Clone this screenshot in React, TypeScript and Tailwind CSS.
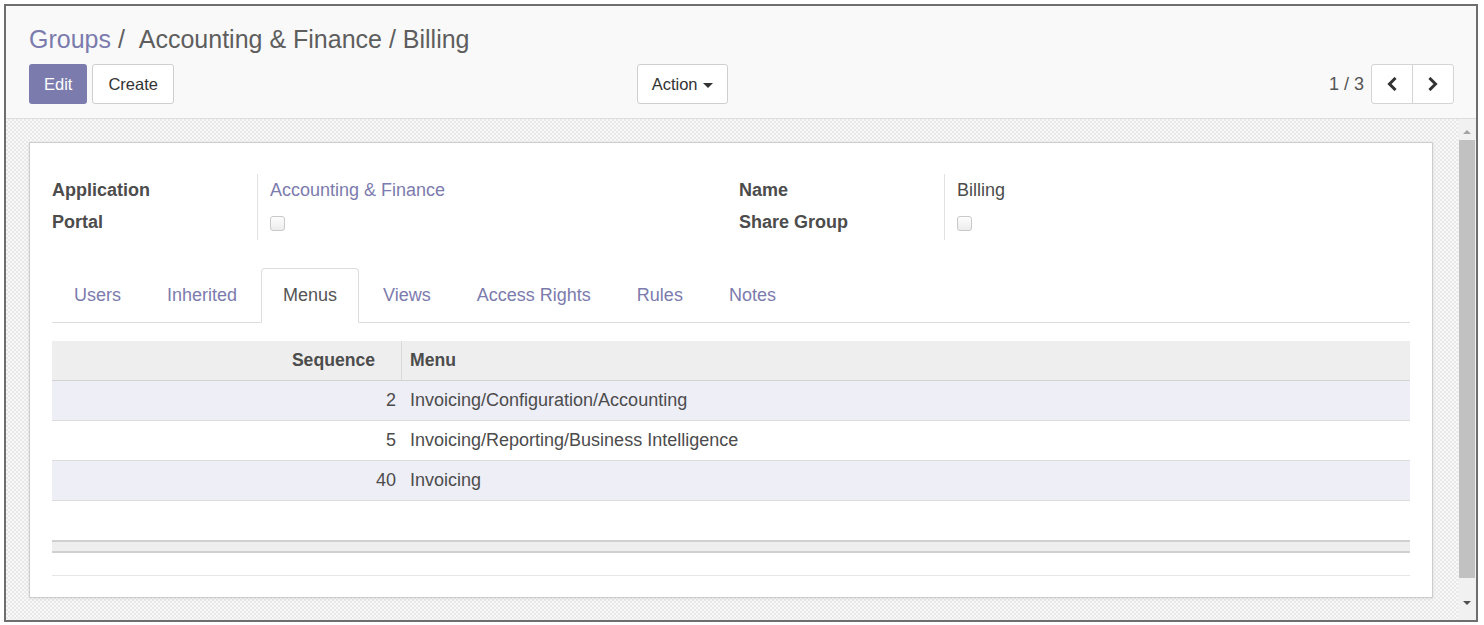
import React from 'react';

const tabs = ['Users', 'Inherited', 'Menus', 'Views', 'Access Rights', 'Rules', 'Notes'];

const menuRows = [
  { seq: 2, name: 'Invoicing/Configuration/Accounting' },
  { seq: 5, name: 'Invoicing/Reporting/Business Intelligence' },
  { seq: 40, name: 'Invoicing' },
];

function Checkbox() {
  return (
    <span className="mt-[2px] inline-block h-[15px] w-[15px] rounded-[3px] border border-[#c9c9c9] bg-gradient-to-b from-[#fdfdfd] to-[#ececec]" />
  );
}

function Chevron({ dir }: { dir: 'left' | 'right' }) {
  return (
    <svg width="12" height="14" viewBox="0 0 12 14" fill="none">
      <path
        d={dir === 'left' ? 'M8.5 2L3.5 7L8.5 12' : 'M3.5 2L8.5 7L3.5 12'}
        stroke="#333"
        strokeWidth="3"
        strokeLinecap="square"
        strokeLinejoin="miter"
      />
    </svg>
  );
}

function FieldGroup({
  rows,
}: {
  rows: { label: string; value: React.ReactNode }[];
}) {
  return (
    <div className="flex">
      <div className="w-[206px] border-r border-[#e2e2e2] pb-[2px]">
        {rows.map((r) => (
          <div key={r.label} className="flex h-[32px] items-center font-bold text-[#4c4c4c]">
            {r.label}
          </div>
        ))}
      </div>
      <div className="pl-[12px]">
        {rows.map((r) => (
          <div key={r.label} className="flex h-[32px] items-center">
            {r.value}
          </div>
        ))}
      </div>
    </div>
  );
}

export default function App() {
  return (
    <div
      className="h-[625px] w-[1484px] bg-white pt-[4px] pr-[6px] pb-[3px] pl-[4px] text-[18px] text-[#4c4c4c]"
      style={{ fontFamily: "'Liberation Sans', Arial, sans-serif" }}
    >
      <div className="flex h-full flex-col border-2 border-[#6e6e6e]">
        {/* Control panel */}
        <div className="h-[113px] shrink-0 border-b border-[#dcdcdc] bg-[#f9f9f9] pr-[22px] pl-[23px] pt-[18px]">
          <div className="h-[30px] text-[25px] leading-[30px] text-[#5e5e5e]">
            <span className="text-[#7c7bad]">Groups</span>
            <span> / &nbsp;Accounting &amp; Finance / Billing</span>
          </div>
          <div className="mt-[10px] grid grid-cols-2">
            <div className="flex items-center pr-[14px]">
              <button className="h-[40px] rounded-[3px] bg-[#7c7bad] px-[15px] text-[16.5px] text-white">
                Edit
              </button>
              <button className="ml-[5px] h-[40px] rounded-[3px] border border-[#cfcfcf] bg-white px-[15px] text-[16.5px] text-[#333]">
                Create
              </button>
              <button className="ml-auto flex h-[40px] items-center rounded-[3px] border border-[#cfcfcf] bg-white px-[14px] text-[16.5px] text-[#333]">
                Action
                <span className="ml-[5px] mt-[2px] inline-block h-0 w-0 border-x-[5px] border-t-[5px] border-x-transparent border-t-[#333]" />
              </button>
            </div>
            <div className="flex items-center justify-end">
              <span className="mr-[7px] text-[#555]">1 / 3</span>
              <div className="flex h-[40px] overflow-hidden rounded-[3px] border border-[#d4d4d4] bg-white">
                <button className="flex w-[41px] items-center justify-center border-r border-[#d4d4d4]">
                  <Chevron dir="left" />
                </button>
                <button className="flex w-[40px] items-center justify-center">
                  <Chevron dir="right" />
                </button>
              </div>
            </div>
          </div>
        </div>

        {/* Scroll area */}
        <div className="flex min-h-0 flex-1">
          <div className="flex-1 bg-[repeating-conic-gradient(#e9e9e9_0%_25%,#f8f8f8_0%_50%)] bg-[length:4px_4px] pt-[23px] pr-[25px] pb-[22px] pl-[23px]">
            <div className="h-[456px] border border-[#cdcdcd] bg-white px-[22px] pt-[31px] shadow-[0_1px_3px_rgba(0,0,0,0.08)]">
              {/* Fields */}
              <div className="grid grid-cols-[687px_1fr]">
                <FieldGroup
                  rows={[
                    { label: 'Application', value: <span className="text-[#7c7bad]">Accounting &amp; Finance</span> },
                    { label: 'Portal', value: <Checkbox /> },
                  ]}
                />
                <FieldGroup
                  rows={[
                    { label: 'Name', value: <span>Billing</span> },
                    { label: 'Share Group', value: <Checkbox /> },
                  ]}
                />
              </div>

              {/* Tabs */}
              <ul className="mt-[28px] flex border-b border-[#dddddd]">
                {tabs.map((t) => {
                  const active = t === 'Menus';
                  return (
                    <li key={t} className="-mb-px mr-[2px]">
                      <div
                        className={
                          active
                            ? 'flex h-[55px] items-center rounded-t-[4px] border border-[#dddddd] border-b-white bg-white px-[21px] text-[#555]'
                            : 'flex h-[55px] items-center border border-transparent px-[21px] text-[#7c7bad]'
                        }
                      >
                        {t}
                      </div>
                    </li>
                  );
                })}
              </ul>

              {/* Table */}
              <div className="mt-[18px]">
                <div className="flex h-[40px] items-center border-b border-[#d2d2d2] bg-[#eeeeee] font-bold text-[#4c4c4c]">
                  <div className="flex h-full w-[350px] items-center justify-end border-r border-[#dadada] pr-[26px] text-[17.6px]">
                    Sequence
                  </div>
                  <div className="pl-[8px] text-[17.6px]">Menu</div>
                </div>
                {menuRows.map((r, i) => (
                  <div
                    key={r.seq}
                    className={
                      i % 2 === 0
                        ? 'flex h-[40px] items-center border-b border-[#dcdcdc] bg-[#eeeef7]'
                        : 'flex h-[40px] items-center border-b border-[#dcdcdc] bg-white'
                    }
                  >
                    <div className="w-[350px] pr-[6px] text-right">{r.seq}</div>
                    <div className="pl-[8px]">{r.name}</div>
                  </div>
                ))}
                <div className="h-[39px]" />
                <div className="h-[13px] border-y-2 border-[#d0d0d0] bg-[#eeeeee]" />
                <div className="mt-[22px] h-px bg-[#e6e6e6]" />
              </div>
            </div>
          </div>

          {/* Scrollbar */}
          <div className="flex w-[18px] flex-col items-center bg-[#f1f1f1]">
            <div className="flex h-[21px] w-full items-center justify-center">
              <span className="mt-[4px] inline-block h-0 w-0 border-x-[4px] border-b-[4px] border-x-transparent border-b-[#a3a3a3]" />
            </div>
            <div className="h-[438px] w-[16px] bg-[#c1c1c1]" />
            <div className="flex w-full flex-1 items-center justify-center">
              <span className="mt-[8px] inline-block h-0 w-0 border-x-[4px] border-t-[4px] border-x-transparent border-t-[#505050]" />
            </div>
          </div>
        </div>
      </div>
    </div>
  );
}
